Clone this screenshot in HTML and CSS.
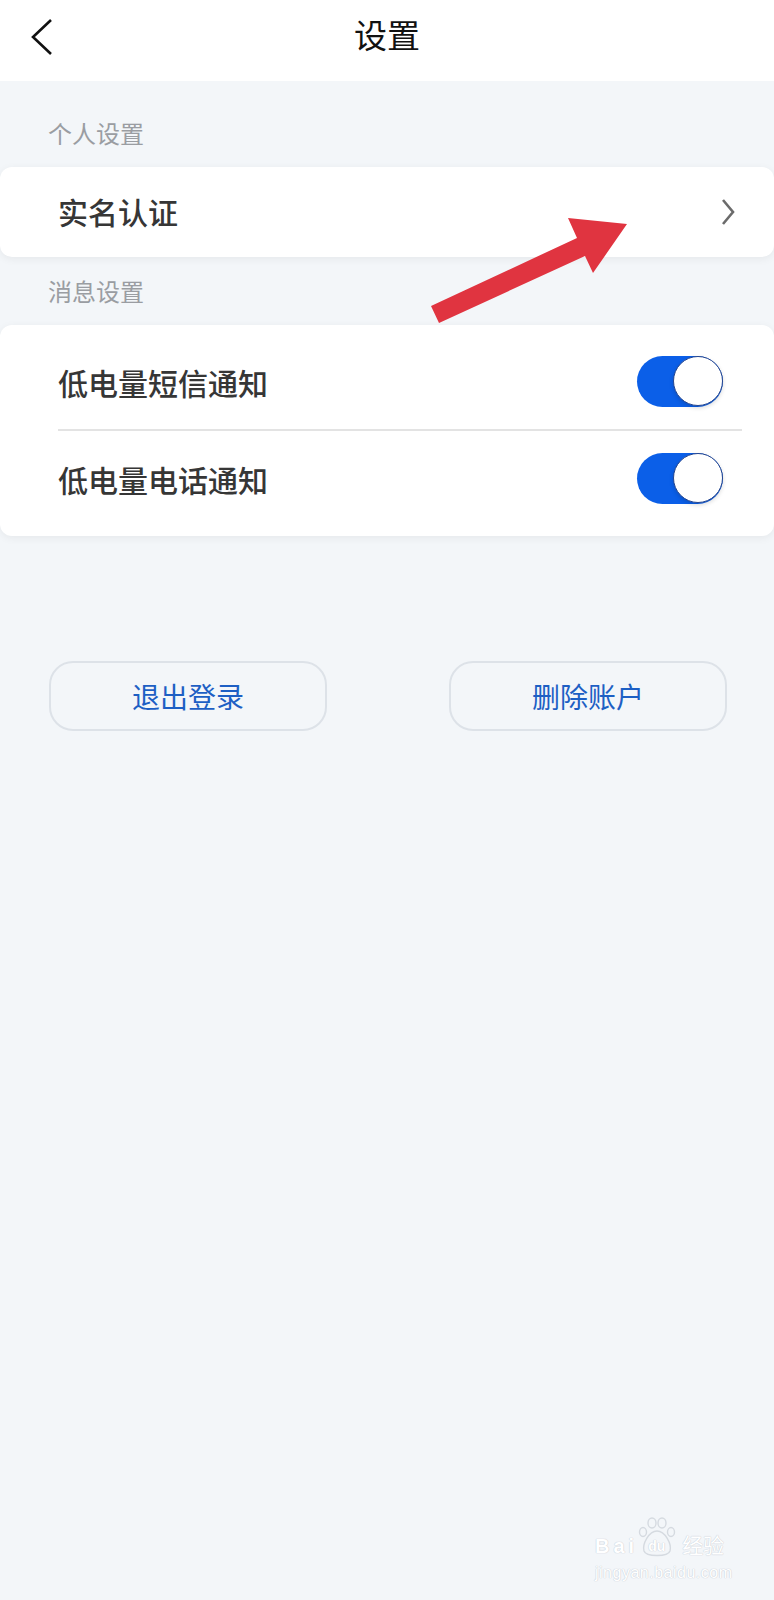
FILE: index.html
```html
<!DOCTYPE html>
<html lang="zh-CN">
<head>
    <meta charset="UTF-8">
    <meta name="viewport" content="width=device-width, initial-scale=1.0">
    <title>设置</title>
    <link rel="stylesheet" href="styles.css">
</head>
<body>
    <div class="header">
        <svg class="back" width="24" height="38" viewBox="0 0 24 38">
            <polyline points="21,2 3,19 21,36" fill="none" stroke="#111" stroke-width="2.6" stroke-linejoin="miter"/>
        </svg>
        <h1 class="title">设置</h1>
    </div>

    <p class="label label1">个人设置</p>
    <div class="card">
        <div class="row rowLink">
            <span>实名认证</span>
            <svg class="more" width="16" height="28" viewBox="0 0 16 28">
                <polyline points="3,2 13,14 3,26" fill="none" stroke="#6b6b6b" stroke-width="2.6"/>
            </svg>
        </div>
    </div>

    <p class="label">消息设置</p>
    <div class="card cardList">
        <div class="row">
            <span>低电量短信通知</span>
            <div class="switch on"><i></i></div>
        </div>
        <div class="line"></div>
        <div class="row">
            <span>低电量电话通知</span>
            <div class="switch on"><i></i></div>
        </div>
    </div>

    <div class="btns">
        <button>退出登录</button>
        <button>删除账户</button>
    </div>

    <!-- 红色箭头 -->
    <svg class="arrow" width="774" height="400" viewBox="0 0 774 400">
        <polygon points="431,306 577,238 568,218 627,224 593,273 585,256 439,323" fill="#e03440"/>
    </svg>

    <!-- 水印 -->
    <div class="mark">
        <div class="markTop">
            <span class="bai">Bai</span>
            <span class="paw">
                <svg width="38" height="40" viewBox="0 0 38 40">
                    <g fill="none" stroke="#d5dae0" stroke-width="1.4">
                        <ellipse cx="14" cy="6" rx="4" ry="5"/>
                        <ellipse cx="24" cy="6" rx="4" ry="5"/>
                        <ellipse cx="5" cy="15" rx="3.5" ry="4.5"/>
                        <ellipse cx="33" cy="15" rx="3.5" ry="4.5"/>
                        <path d="M19 14 C 11 14, 4 27, 6 34 C 8 40, 30 40, 32 34 C 34 27, 27 14, 19 14 Z"/>
                    </g>
                </svg>
                <b>du</b>
            </span>
            <span class="jy">经验</span>
        </div>
        <div class="markUrl">jingyan.baidu.com</div>
    </div>
</body>
</html>
```

FILE: styles.css
```css
body{margin: 0;background: #f3f6f9;font-family: "Noto Sans CJK SC", "Noto Sans", sans-serif;color: #333;min-height: 1600px;position: relative;}
.header{height: 81px;background: #fff;position: relative;display: flex;align-items: center;justify-content: center;}
.back{position: absolute;left: 30px;top: 18px;}
.title{margin: 0 0 14px 0;font-size: 33px;font-weight: 400;color: #111;line-height: 40px;}
.label{margin: 22px 0 0 0;padding-left: 48px;font-size: 24px;line-height: 24px;color: #9a9da2;}
.label1{margin-top: 40px;}
.card{margin-top: 22px;background: #fff;border-radius: 12px;box-shadow: 0 2px 8px rgba(0,0,0,0.06);}
.row{display: flex;align-items: center;justify-content: space-between;height: 95px;padding: 0 51px 0 58px;font-size: 30px;font-weight: 500;color: #363636;}
.rowLink{height: 90px;padding-right: 38px;}
.rowLink span{margin-top: -2px;}
.cardList{padding: 9px 0 10px 0;}
.line{height: 2px;background: #e3e3e3;margin: 0 32px 0 58px;}
.switch{width: 86px;height: 51px;border-radius: 26px;background: #0b5fe8;position: relative;}
.switch i{position: absolute;right: 0;top: 0;width: 48px;height: 48px;border-radius: 50%;background: #fff;border: 1.5px solid #24458f;box-shadow: 0 2px 4px rgba(0,0,0,0.15);}
.btns{display: flex;justify-content: space-between;padding: 0 47px 0 49px;margin-top: 125px;}
.btns button{width: 278px;height: 70px;border: 2px solid #dde2e8;border-radius: 24px;background: transparent;color: #1d5fc4;font-size: 28px;font-weight: 400;font-family: "Noto Sans CJK SC", sans-serif;}
.arrow{position: absolute;left: 0;top: 0;}
.mark{position: absolute;left: 595px;top: 1517px;color: #fff;font-family: "Liberation Sans", sans-serif;text-shadow: 0 0 1px #c6ccd4, 0 0 1px #c6ccd4;}
.markTop{display: flex;align-items: flex-end;height: 40px;}
.bai{font-size: 20px;font-weight: 700;letter-spacing: 4px;line-height: 14px;margin-bottom: 4px;}
.paw{position: relative;width: 38px;height: 40px;margin-right: 6px;}
.paw svg{position: absolute;left: 0;top: 0;}
.paw b{position: absolute;left: 10px;top: 22px;font-size: 14px;line-height: 14px;}
.jy{font-family: "Noto Sans CJK SC", sans-serif;font-size: 21px;line-height: 21px;margin-bottom: 2px;}
.markUrl{font-size: 16px;line-height: 16px;margin-top: 8px;letter-spacing: 0.5px;}
```
